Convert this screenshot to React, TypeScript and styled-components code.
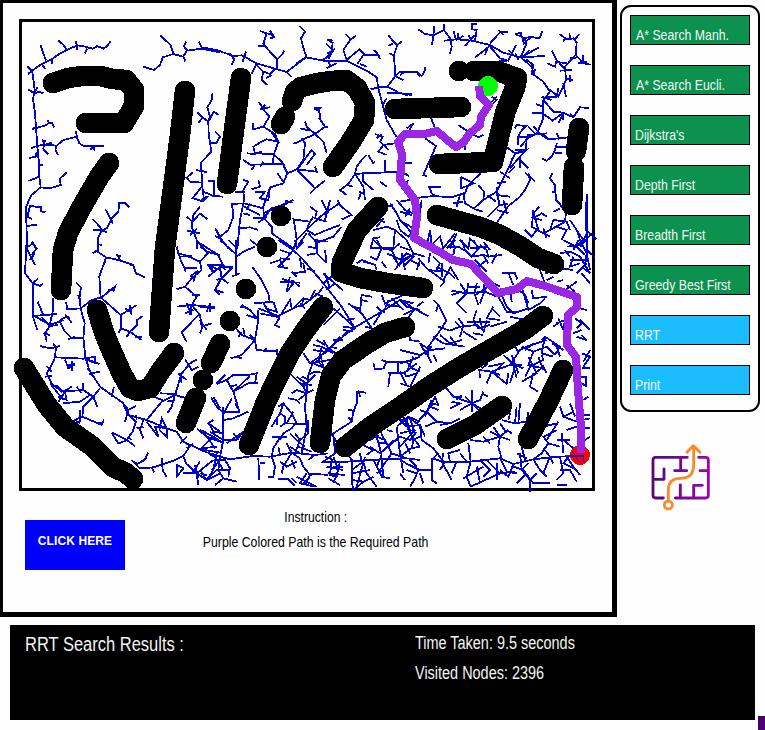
import React from "react";
import styled, { createGlobalStyle } from "styled-components";

const GlobalStyle = createGlobalStyle`
  * { box-sizing: border-box; }
  body { margin: 0; background: #fefefe; font-family: "Liberation Sans", Arial, sans-serif; overflow: hidden; }
`;

const Window = styled.div`
  width: 765px;
  height: 730px;
  display: grid;
  grid-template-rows: 617px 105px;
  row-gap: 8px;
  background: #fefefe;
`;

const Workspace = styled.div`
  display: grid;
  grid-template-columns: 617px 140px;
  column-gap: 3px;
`;

const Board = styled.main`
  border: 3px solid #000;
  border-right-width: 5px;
  border-bottom-width: 5px;
  padding: 16px 0 0 16px;
`;

const MapFrame = styled.div`
  width: 576px;
  height: 472px;
  border: 3px solid #000;
  svg { display: block; overflow: visible; }
`;

const BoardFooter = styled.div`
  display: grid;
  grid-template-columns: 100px 1fr;
  margin: 29px 0 0 6px;
`;

const ClickButton = styled.button`
  width: 100px;
  height: 50px;
  border: 0;
  padding: 0 0 9px;
  background: #0000ff;
  color: #fff;
  font: bold 12px "Liberation Sans", Arial, sans-serif;
  letter-spacing: 0.1px;
`;

const Instructions = styled.div`
  width: 382px;
  display: flex;
  flex-direction: column;
  align-items: center;
  margin-top: -16px;
`;

const NarrowText = styled.span<{ $size: number; $center?: boolean; $stretch?: number }>`
  display: block;
  font-size: ${(p) => p.$size}px;
  line-height: 25px;
  white-space: nowrap;
  transform: scaleX(${(p) => p.$stretch ?? 0.82});
  transform-origin: ${(p) => (p.$center ? "center" : "left")};
`;

const SideColumn = styled.aside`
  display: flex;
  flex-direction: column;
  padding-top: 5px;
`;

const Menu = styled.nav`
  width: 140px;
  height: 407px;
  border: 2px solid #000;
  border-radius: 11px;
  padding: 8px;
  display: flex;
  flex-direction: column;
  gap: 20px;
`;

const MenuButton = styled.button<{ $tone: "green" | "sky"; $indent?: number }>`
  width: 120px;
  height: 30px;
  flex: none;
  border: 1px solid #000;
  padding: 6px 0 0 ${(p) => p.$indent ?? 4}px;
  background: ${(p) => (p.$tone === "green" ? "#0c914f" : "#1bbdff")};
  color: #eefaf4;
  text-align: left;
  font-family: "Liberation Sans", Arial, sans-serif;
`;

const Logo = styled.svg`
  width: 100px;
  height: 100px;
  margin: 13px 0 0 10px;
  fill: none;
  stroke-width: 8.5;
  stroke-linecap: round;
  stroke-linejoin: round;
`;

const Footer = styled.footer`
  display: flex;
  gap: 3px;
  padding-left: 10px;
`;

const Results = styled.section`
  width: 745px;
  height: 95px;
  background: #000;
  color: #f4f4f4;
  display: grid;
  grid-template-columns: 390px 1fr;
  padding: 6px 0 0 15px;
`;

const ResultsHeading = styled.div`
  padding-top: 1px;
`;

const Stats = styled.div`
  display: grid;
  grid-auto-rows: 30px;
  align-content: start;
`;

const Corner = styled.div`
  width: 7px;
  height: 14px;
  align-self: flex-end;
  background: #4b0072;
`;

// Search tree branches, stored per sector at three units per pixel.
const sectors: { x: number; y: number; branches: string[] }[] = [
  {
    x: 0,
    y: 0,
    branches: [
      "M332 124L322 138L310 146L292 138L278 146L255 140L232 136L205 148L180 160L155 178L125 192L96 212L102 250L104 270L99 298L104 330L108 380L112 440L117 490L118 530L122 562L95 585L78 620L80 700L82 748",
      "M122 136L130 160L138 182M175 122L190 134L200 150M228 122L232 150M255 160L262 146M82 200L96 212L84 222M155 178L157 192M125 192L136 207M85 268L103 280L118 275L130 280M103 280L112 262",
      "M108 384L135 377L148 368L157 370L162 382M142 360L148 370M97 388L108 380M92 446L110 438L135 434L170 437L190 420L230 410L238 430L252 438L312 438M228 394L231 412M270 450L280 440L284 452",
      "M126 418L135 434L155 428M128 445L145 463M135 420L130 445M170 437L166 450L175 465M88 474L108 470L110 455M117 494L130 495M85 543L118 530M122 562L150 565L182 555L180 535L200 518",
      "M136 637L122 634L124 622L90 618L82 650L96 657M82 678L110 674M388 622L375 608L358 608L355 635L335 655L320 685L307 690L293 715L293 748M316 628L335 662L338 672M278 658L292 672L307 690L278 690M307 690L322 698M297 733L307 735",
      "M430 200L462 210L480 195L488 172L520 162L550 170L560 152L605 146L660 157M480 106L512 135L520 162M558 124L552 140L562 152M550 168L556 184M597 124L606 146",
      "M560 650L578 665L600 640L622 658M600 620L580 645L575 680L592 725L590 748M562 692L600 700M570 705L592 685M600 740L618 750M530 740V750M645 685L660 715M97 725L108 748",
      "M592 338L608 352L596 368M608 352L625 365M588 510L620 516M578 518L560 533L570 545L605 548M605 560L578 595L610 604L625 588",
    ],
  },
  {
    x: 200,
    y: 0,
    branches: [
      "M0 132L5 142L50 150L100 168L125 166L170 190L232 208L260 216L318 172L370 182L440 182L500 212L530 232L535 265L548 315L560 360L590 412",
      "M88 160L103 178L95 195M138 155L128 185M170 190L155 222M180 93L200 100L222 106M200 100L190 130L205 150L232 178V208M175 138H195M210 92L222 112L210 115M232 178L245 165L253 152",
      "M170 195L190 215L185 240L202 255M190 215L210 222L225 208M198 235L215 225M298 78L315 95L303 115L312 150L320 172M260 216L275 232M318 172L290 190",
      "M380 118L398 128L395 155L380 172L365 182M380 118L400 122M378 130L398 150M382 160L400 150L385 178M380 205L410 190M385 185L392 200",
      "M436 102L452 118L468 108M452 118L430 150L440 180M440 180L478 148L492 162L472 192M492 164H535L522 150M535 164L540 178M480 192L500 200",
      "M566 106L580 125L592 135L605 125M592 135L582 165L586 230M565 138L580 130M568 160L582 167M586 228L600 215L650 215L660 230M586 228L562 260L535 262M586 228L610 240M562 260L600 280L635 285M560 278H605M512 268L535 262M548 315L560 295",
      "M25 365L42 335L55 345M38 278L35 300L22 322L30 350L25 365L26 400L34 455L3 488L7 560L12 600M45 395L60 410L50 428L28 430M25 542H43V588L70 590M10 575L40 588M0 605L20 588",
      "M175 305L190 325L210 322M180 330L195 315M185 322L208 350L190 380L160 388L158 370M190 380L225 402L235 425L222 462L218 490M235 425L200 418L185 425L160 440L165 460L220 462M142 460L165 462L185 455",
      "M128 478L150 494L250 492L262 520L250 550L210 562M155 510L165 492M180 500L190 485M220 462L245 485L262 520L290 508L310 480L315 430L305 415M215 398L238 430",
      "M280 432L345 402L375 380M345 402L320 380L315 365M300 385L330 392M345 402L370 425L380 458M350 325L362 345L358 355L375 380L385 382M342 325H360L355 332Z",
      "M290 508L350 515L345 500M290 508L345 565L375 542M345 565L330 580M292 508L335 450L345 462L320 495M310 480L325 465M155 568L180 560L175 540M165 575H195L180 595L205 600L210 562",
      "M130 540L145 545L130 570L132 600L120 660L112 748M105 575H135M232 520L250 545M92 612L132 610L190 625M96 610L100 650L85 690L58 712M50 690L62 715L85 745M45 708L60 715M120 685L150 682L175 690M130 640L150 645M150 610L140 630M132 620L180 645",
      "M210 562L190 620L192 655L215 680V700L280 745M190 640L280 600M190 655L215 625L260 612M255 602L280 608M158 655H192M175 668L200 650",
      "M500 465L485 480L470 500L465 522L490 520L590 516M505 465L520 490L525 485M555 480V515M465 522L490 560L495 600M465 522L445 552L420 570L440 585M440 555L460 560M478 575L495 582M490 520V545L520 570M540 545L560 560M475 600L482 580",
      "M525 402L548 410L540 425L550 435L585 430M530 415L545 402M550 435L535 455L560 465M550 432L565 450M610 490H630M605 520L625 525M640 370L625 395",
      "M280 655L285 680L290 720L280 748M280 658L330 665L340 650M290 720L330 680L360 650L415 612M330 620L350 635L345 655L380 665M365 600L385 640M390 600L375 660M415 612L455 645L425 658M412 600L420 615",
      "M320 690L345 705L380 690L420 675M325 700L350 728L400 710L425 680M295 735L320 700M345 665L385 630M330 665L320 690M348 725V748",
      "M520 690L560 680L585 690L620 720M550 655L530 680M540 660L555 668M520 715L512 745H580L585 690M520 715L540 712M570 610L590 640L600 660L620 680L635 700M590 600L615 630L640 640M600 690L590 660M560 620L580 615",
    ],
  },
  {
    x: 400,
    y: 0,
    branches: [
      "M55 88L75 102L100 106L132 90L150 115L155 140L150 162M103 78L100 106L96 136M132 72V92M133 122L170 118L215 122L270 135L310 158L362 172L395 200L402 225L430 245L450 275L430 300L428 360L410 402L380 415L378 450L345 462L318 520L290 575L298 615L262 652",
      "M160 92L168 118M175 98L172 118L190 108M213 72H230M215 72L217 88L230 90L225 122M195 138L225 105M215 122L205 105M325 95L300 97L270 130M310 105L295 90M225 172L270 138L285 155M255 165L262 145M270 140L300 175L325 182L348 135M325 150L335 160M298 182H320",
      "M345 102L375 115L390 110L418 115L428 92M375 115L378 135L362 172M362 98L372 130L392 112M348 102L362 98M362 172L418 142M362 172L434 168M345 160L355 180M375 165L388 150",
      "M478 102L500 118L520 115L530 128L527 165L495 200L498 240L475 290L450 270M508 98L510 115M538 102L525 118M495 115L490 125M527 165L550 190L572 194M510 175L535 172M550 165V185M535 190L560 185",
      "M455 152L470 180L495 208M442 190L465 200L470 180M465 185L500 190M480 212L515 210M510 225V245M495 235L520 240M490 250L498 290M475 265L470 290L435 290M378 178L400 195L395 225M405 208L400 225",
      "M430 300L460 335L490 338L520 352L540 322L566 324M430 320L408 312M395 338L428 340L458 362L490 338L475 370M520 352L510 340M425 290L455 300M490 338V360",
      "M345 385L350 375L378 378L362 395L355 410V435M400 378L420 402L445 418L508 412M380 405L440 400M355 412H385L362 440M385 380L405 400M445 418L430 400M470 400L478 418M470 430L468 442L498 440M468 442L455 470L440 482L425 475M465 460L485 458",
      "M315 438L345 460L378 450L355 475L330 505M345 462L335 480M378 450L345 450M355 475L385 505M360 470V505M385 520L390 540L375 570L360 590L325 618L288 672M375 518L392 532L406 545M300 515L330 535M345 500L325 520M318 545L290 550M290 575L250 600M290 560L298 615L325 612M288 585L330 590M262 585L288 605M310 600L320 640M290 630L325 640",
      "M75 415L108 438L70 525L82 530M92 350L105 385M175 375L205 395L235 412L250 405M195 425V450M275 290L290 300L270 318M290 290L270 310",
      "M40 595L100 588L155 592L190 580L195 610L225 628L250 635M85 560H122M88 560L95 580L105 588M182 530V565L222 550L182 530M242 520L205 555L190 590M180 585L170 620M235 555L252 575L250 600L222 625M160 610L190 605",
      "M0 225L15 215H50L65 228L76 210L75 200M0 278L20 285L35 280M20 385L40 370M15 490H35M15 520L28 530M15 555L25 540M0 605L30 600M0 635L35 645M5 665L50 690M15 650L30 625M0 690L25 710L40 690M60 640L65 600",
      "M80 740L90 690L95 735L120 710L130 745L165 700M140 745L165 720M170 700L150 745M180 720L205 745L210 715L240 745",
      "M458 518L450 535L465 555L468 600L478 610L498 640L495 665L450 690L430 700L395 680L400 640L418 620M392 652L425 660M398 630L415 690M440 650L425 640L400 655M375 690L395 710L410 690L450 710M430 685L440 715M450 690L460 660L500 665L510 690M455 575H467M460 635L480 625",
      "M562 583V745M558 605V690L590 718M510 660L550 720L520 745M470 680L500 690L485 720M530 690L545 735L575 700M540 740L560 700",
    ],
  },
  {
    x: 0,
    y: 240,
    branches: [
      "M80 0L75 100L98 130V225L150 255L190 240M75 25L100 10M80 25L105 75M95 5L110 25L95 45M90 60L105 40M98 130L120 138L130 130M98 130L115 115M113 185L130 225M98 228L172 222M158 175V215L148 260L135 280L140 305M98 228L112 270M125 232L150 258M130 280L150 285",
      "M175 255L150 258M180 240L200 230L215 248M195 225L210 235M180 245L195 275L215 295L250 293M205 298L225 290M227 127L243 142L238 175L242 205L254 250L250 293L256 352L268 390L300 440L335 465L368 488L385 525L440 540L500 565L530 575L550 605L600 628L660 638",
      "M198 185L202 208L242 205L275 180L305 172M233 165L242 180M293 0V35L318 52L298 110L302 172L362 225V265L390 275L410 290L425 300M278 40L293 30M318 52L355 60L400 75L408 100L435 112M318 52L312 75M350 42L360 60M355 60L362 45M385 68L395 78M305 172L345 140L340 155M325 150H345",
      "M362 225L410 195M375 205L395 218M390 195L395 225M362 265L355 280M390 275L412 255V240L427 228M390 275L380 290M405 290H425",
      "M120 318L150 325L180 318M150 325L168 322L165 352L250 356L285 350L286 370L256 356M160 310L168 325M165 352L155 375L140 400L155 430L185 455L250 450L280 470L300 445M195 358L205 385L225 370M215 362V392M200 375H225M140 378L155 395M135 410L155 408M256 356L298 372M262 385L275 400L300 395M268 400L282 410",
      "M150 430L190 480M175 485L195 455L200 480L175 470M170 435L190 455L215 440M250 430V450M230 440L245 460M188 490L240 485L270 465M280 470L292 500M280 470L250 500L247 530L305 555L312 538M247 530L225 540L240 550M240 510V545M290 550L310 548",
      "M335 470L342 440M368 488L385 510L375 545M385 510L408 498M385 525L408 545L398 575L380 600L338 578M380 600L355 612M380 600L405 618M335 578L355 610M385 590L395 600M408 525L410 540",
      "M440 540L485 485L525 465L560 475M462 470L490 482M525 465L515 500L502 520M480 460L530 462M500 485L525 480M525 465L545 400L570 370L592 358M555 358L575 390L595 380M535 400L560 420M540 400L545 430M430 540L420 570L430 595M440 545L475 590L465 560L500 565L485 535L478 570L500 590V565M410 565L430 560",
      "M395 660L420 685L460 682L520 662L550 648M408 675L440 655M445 638L430 665M400 665L415 672M455 680L462 697M485 655L488 690L500 712M545 600L570 618L550 648L558 670L590 700L620 720L660 700M530 675V710L550 685ZM540 610L560 590M590 565L620 590L660 605M600 628L640 590M600 570L620 578M560 625L580 610",
      "M575 700L600 665M590 700L595 735M590 700L640 660M550 700L590 700M585 675L595 715M620 720L640 690L650 640M605 625L650 620M640 540L625 550L660 575M640 470L660 505",
      "M530 20L540 55L558 95M530 40L555 45L600 65L605 90L575 115L555 140L530 148M590 0L620 35L660 45M600 65L625 38M540 50L575 48M555 85H590M570 110L590 95L580 125M555 140L590 170L575 195L530 200M575 165L600 165M575 195L570 225M575 195L645 202M630 190V215M575 195L600 225L605 260M595 225L545 278L560 305M605 260L635 250M600 280L610 255M560 190L575 225M622 75L660 90M625 75L640 100M645 150L660 120M555 220L580 210",
    ],
  },
  {
    x: 200,
    y: 240,
    branches: [
      "M0 10L55 45L75 90M108 0V105M110 50L130 35L165 20M60 0L110 45M85 0L105 20M22 75H60L95 85L65 115L45 150L60 165M25 110L60 80L100 80M40 95L30 75M65 115L85 130M45 150L72 158M95 110L120 100M60 80L65 115L50 120M150 0L185 25M20 270L0 240",
      "M158 82L185 120L205 160L210 190M125 195L150 210L175 240L165 300L170 330L230 335M120 200L145 205M140 225L170 235M162 190L220 185M175 205L235 228L290 200L310 195L355 160L370 140M180 220L240 232M190 190L215 225M195 205L230 215L220 185M175 210V240M245 220L270 180L275 205M240 232L225 255L240 262M280 205L310 175L330 180L345 150M300 190L315 205M310 175L305 200M345 160L370 170",
      "M105 262L125 285L165 300L125 345L92 355M125 275L115 290M130 265L135 290M165 300L150 285M105 350L125 355M190 335L200 325M215 335L232 330V345",
      "M235 0L280 30L310 60L370 130L425 200L465 265L430 260M280 30L255 60L235 80L265 85M240 55L270 58M210 70L240 60L250 80M240 30L270 40M260 15L290 40M310 70L315 95L275 100M320 85L345 95M260 155L280 130L245 115M240 125L300 128M270 110L260 155M275 120L300 140M275 95L290 110M300 55L305 85",
      "M285 0L290 25L310 5M350 0V40L320 45M350 40L380 70M345 0L385 5M375 30L380 70M325 20L350 25M370 100L430 152M375 100L390 145M370 130L395 110M380 150L405 130",
      "M370 255L395 230L420 205M445 190L485 220L515 265M480 215L485 165L515 170M460 200L480 205M485 180L505 185M440 240L465 265L440 280L365 345M400 205L440 240L465 235M430 270L460 275M425 290L445 270M465 262L545 215L600 180L640 190M515 265L495 260M520 255L545 215L530 200M545 165L555 190L620 160M565 180L550 220M600 180L620 200L660 210M575 175L610 210M620 160L640 170M560 195L600 200M610 225L640 210",
      "M340 315L365 320L400 340M370 300L385 325L415 345M350 300L375 315M375 340L420 290M365 320L355 370M330 370L365 345M310 340L330 370L390 360M340 330L375 335M345 355L375 385L340 370M360 340L370 380M390 320L410 325M400 300H430",
      "M340 365L325 405L320 460L315 500L320 560L305 640M325 405L345 395L380 400M270 400L310 440L320 460M290 410L325 435M320 460L290 450L275 460M300 430L335 435M295 480L320 460L340 450M310 440L345 405M305 410L330 420M265 475L290 480L300 490",
      "M235 500L250 490L275 520L290 550M250 490L240 520L215 560M240 520L255 530V550L325 552M255 550L240 560M290 545L275 565L250 580L240 600M230 530V555M260 550L280 515M215 592H262M240 592L220 625L215 650M325 540V580L300 600L285 580M270 580L290 600L315 620M295 620L335 635",
      "M50 432L80 420L100 405H145L170 400L165 430M50 430L75 405M80 420L100 455L145 430M100 455L150 408M100 455L118 515H70M145 430H175M90 440L110 435M70 500V600L60 650M33 472L50 500L72 520L95 475M72 540L100 535L145 515M25 545L40 575L72 580M30 575L70 600M105 490L120 515M80 610L130 575M70 600L110 600L130 575M0 570L40 590L70 610M10 575L45 625M100 580L115 600",
      "M0 630L60 650L90 658L160 648L210 650L275 638L345 645M60 650L55 690L70 715L110 725M45 660H75L90 685L85 710M35 690L60 660M40 640L70 690M0 690L20 720L50 690H90M70 715L45 735M0 700L20 705M25 640L50 655M175 655L178 720M180 670H195M215 650L225 680L220 710L205 712",
      "M235 620L240 645M260 610L275 638L250 680L245 700M240 665L260 680L290 665M275 638L300 655L310 680L330 705L315 735M270 620L300 640M285 640L300 600M275 660L285 685M235 718H265L285 738M290 710L320 725L350 740M330 705L355 700M325 660L345 645L385 640M320 700L300 730L345 740M275 715L290 730M310 730L330 712M325 700L385 705",
      "M498 458L470 455V490L460 515L455 545L400 580L405 640L370 665H440L510 660L620 655L660 660M475 450L480 470M445 510L465 512M455 545L445 530M390 575L410 605M395 660L390 705L410 710L420 665M400 650L415 690L400 730M380 680L430 690M385 700L435 705M385 715L420 735M400 680H430M455 665V720L460 750L490 725L455 720M455 690L490 665L500 700L530 740M440 640L460 665M480 640L485 665M495 650L470 740M455 700L510 690M490 725L520 710M375 650L400 660",
      "M520 370L525 388L555 385M545 360L560 365H620L660 350M560 365L550 385M595 365V400M565 400H610L650 370M570 400L565 440M610 395L620 410M620 365L640 390",
      "M530 590L555 600L575 640L620 655M530 590L545 645L530 680M510 620L540 640M590 560L600 640L610 700M590 560L625 530L660 545M540 570L555 605M510 600L535 585M490 615L520 630L500 645M540 640L600 590M545 655L550 710M575 640L540 690M620 540L640 600L660 590M600 540L620 560M555 625L580 600M600 580L640 570M600 650L640 620M535 610H560M615 610L630 640M560 570L580 575M520 660L545 710L570 715M620 690L650 700M630 580L660 620M630 660L650 680M530 700L550 690",
      "M520 0L545 25L530 60L510 50M530 0L545 25L575 30L600 10M470 70L485 60L525 75L530 90M490 65L510 70M560 40L605 60L650 40M575 30L590 60M605 60L585 90M605 40L615 90M590 80L630 50M545 65L560 85M630 60L660 75M580 50L600 80M0 200L45 205M30 190L20 215",
    ],
  },
  {
    x: 400,
    y: 240,
    branches: [
      "M0 60L20 40L40 50L10 80M0 20L30 30M20 0L40 40L75 50M55 55L80 85L135 125M100 50L120 70L110 90M110 80L150 100L165 115M125 70V110M135 125L120 140M150 85L130 120M60 60L50 90M85 90L130 95M90 40L85 70M150 80L175 120",
      "M150 0L165 20L160 45M185 0L195 30L215 50L250 45L270 50M175 20L200 35M215 50L240 20M240 15L260 30L265 50L305 45M250 45L265 70M210 25L260 20M225 60L260 95M270 30L250 5M290 40L275 70M150 20H180M220 0L235 25M235 80L260 60",
      "M155 152L200 160L255 155L290 170M155 165L185 155M180 130L200 160L170 190L200 220M205 130L200 160M255 125L250 150L225 165L235 195M270 120L255 150L240 190M200 140H240M230 130L225 155M250 150L280 130L300 140M305 98L345 100L352 118M325 98L340 135M305 165L320 200L340 220L385 205M295 170L320 215H355M330 150L335 185M365 140L385 210L420 190L435 175M350 145L375 165L385 190M395 150L400 175L440 170M420 90L435 130M435 100L455 95M440 120L460 110M470 125L490 120",
      "M480 40L510 35L540 50L570 100L545 80M490 0L530 20L555 45M500 20L540 15M540 0L560 40L555 80M520 50L510 80L540 70M560 40L570 90M495 30L510 50M530 100L560 70M520 30L535 0M560 0V45M480 85L520 90M545 100L570 130M510 60H555M495 150L530 125M500 135L525 155M585 52L560 30",
      "M0 180L20 190L40 205L85 228M50 200L70 185M20 240L45 205M100 180L115 195L135 235L140 240L125 265L85 320V350L95 370M115 195L108 215M0 330L60 345L90 330L135 325M25 260L30 300L60 305M115 260L150 272L180 260L230 255L250 270M165 245L180 260M120 285L150 310L185 300M100 290L130 310L195 320M175 235L190 255L180 290M230 210L220 240L235 265L270 255M240 235L245 260M260 240L250 280M200 245H270M280 200L260 235L300 240M275 205L300 230",
      "M0 370L50 355L95 320M35 385L60 395M20 410L50 400M0 395L20 435M80 345L60 310L90 330M150 290L170 315M330 230L375 240M270 260L320 245M100 345L110 365M40 350L20 395M0 430L30 440L60 380M190 275L230 300M220 280L250 285",
      "M470 250L495 240L490 270L475 235M460 260L480 245M525 235L545 250L530 265M520 200L560 210M540 240L570 270M520 280L545 270M530 290L560 300L545 285M545 340L570 350L550 380M550 365L570 330M545 385H570M540 410H558V435M545 430L560 440M550 480L565 470M540 525H570M545 540L570 535M545 565H570M555 600L570 590M480 500L490 530L520 515M490 530L530 545M510 490L525 530M500 570L530 560",
      "M240 415L238 390L275 395L330 375L360 330L380 320L440 300M245 385L265 370M275 395L260 430M275 395L320 432L325 400M275 395L300 405M265 380L310 370L280 400M320 355L345 380L330 430M340 375L350 415M310 345L345 375L370 385M335 345L355 400M330 375H365M365 320L400 335L440 320L465 345M375 330L400 310M425 300L435 290L480 320L465 345M435 290L425 340L460 350M400 335L385 375L430 385M390 380L430 360L425 345M385 350L410 400L365 425M395 370L375 410M400 400L390 440L415 455M405 400L430 380L440 400M415 350L430 390M470 320L480 350M455 310L490 330M345 320L355 335",
      "M135 440L160 470L215 490L240 480L250 455M215 450V515M195 470L235 510M160 470H185M185 465L170 480M215 490L180 510M215 490L250 510M155 485L180 490L150 505M245 460L265 470",
      "M0 540L30 535L50 550L100 490M30 535L45 580M20 560L60 555L75 590M60 555L65 600L100 625L130 665M105 470L95 490L115 495ZM90 500L115 510M75 560L110 545L150 550L180 535M95 480L75 530M150 550L120 555M0 590L30 600L50 575M40 600L35 625L60 620M0 620L45 570M60 510L85 520L110 545M10 530L30 580",
      "M95 655L130 665H210L300 655L340 672L400 658L470 650L545 648M95 655V720L110 730M95 660L115 640M130 640L125 665L155 720M100 690H55L0 660M55 690L45 715L30 740M30 675L60 690M150 665L145 640L180 630M205 610L212 665L200 710L212 740M180 640L200 665M170 665L155 700M190 715L250 680M212 740L300 700L345 695M240 660L270 690L250 710M260 660L300 700M230 680L240 730M290 670V720M300 655L320 695L350 700M340 672L325 710L300 690M120 690L135 665",
      "M210 600L250 605L300 590L325 570M250 590L270 610M280 560L300 590L295 620L305 655M270 575L300 590L330 600M305 540L345 550L350 500M345 550L380 545L385 515M325 540L330 520M320 570L335 580M360 490L355 550M300 550L320 580",
      "M470 570L430 590L445 610L425 640L400 658M430 560L470 550M445 610L480 620M475 545L440 600M485 580L490 640M470 600H510M430 625L450 650L460 670M490 600L520 625M500 650L520 680L540 705M480 650L490 700L470 720M360 640L365 690L390 720V755M365 690L385 670M340 680L370 690L400 730H450M390 720L410 700M400 658L420 690L440 710M375 660L365 620M450 650L430 700M480 690H510L530 725M470 735H500M505 650L490 670L530 690M380 700L350 730M0 700L15 720M70 730L60 700M350 640L380 655",
    ],
  },
];

// Obstacles painted with a round brush.
const obstacles = [
  "53,83 68,78 82,76 100,76 113,79 126,80 134,90 134,106 124,123 86,123",
  "109,163 99,177 80,210 68,233 63,250 61,290",
  "185,91 180,135 175,173 165,248 159,332",
  "241,78 234,130 227,184",
  "292,101 295,92 301,87 318,83 331,81 346,80 357,88 365,103 364,120 350,143 333,167",
  "281,124 285,117",
  "281,216 281,216",
  "267,247 267,247",
  "246,289 246,289",
  "230,321 230,321",
  "220,344 211,363",
  "203,380 203,380",
  "196,398 186,423",
  "395,109 461,107",
  "459,71 459,71",
  "474,71 497,71 517,78 515,88 506,110 500,133 493,162 439,164",
  "579,128 576,151",
  "574,167 572,205",
  "437,215 480,227 500,235 520,246 538,258 554,264",
  "378,207 357,230 342,262 341,272 360,278 387,283 423,288",
  "97,310 105,335 113,354 122,374 130,388 138,391 150,388 160,372 174,353",
  "24,368 47,405 65,427 92,446 113,467 126,473 133,479",
  "323,307 306,329 290,353 275,383 266,402 249,445",
  "405,327 385,333 368,343 343,360 331,376 325,400 320,443",
  "345,447 370,427 400,407 430,386 460,367 500,344 524,330 543,316",
  "447,439 475,425 502,406",
  "563,370 548,402 528,439",
];

const requiredPath =
  "479,86 480,96 489,105 481,117 480,125 469,134 464,142 456,147 446,139 437,131 425,134 405,134 398,142 402,154 400,180 415,200 417,217 414,238 440,252 453,260 471,264 482,276 498,293 517,289 527,281 545,286 577,297 577,307 568,315 567,345 576,357 578,390 581,427 581,453";

function SearchMap() {
  return (
    <svg width="570" height="466" viewBox="22 22 570 466" fill="none" shapeRendering="crispEdges">
      <g stroke="#0000cd" strokeWidth="5.4">
        {sectors.map((s) => (
          <g key={`${s.x}-${s.y}`} transform={`translate(${s.x} ${s.y}) scale(${1 / 3})`}>
            {s.branches.map((d) => (
              <path key={d} d={d} />
            ))}
          </g>
        ))}
      </g>
      <g stroke="#000" strokeWidth="20.6" strokeLinecap="round" strokeLinejoin="round">
        {obstacles.map((points) => (
          <polyline key={points} points={points} />
        ))}
      </g>
      <circle cx="488" cy="86" r="10" fill="#00ff00" />
      <circle cx="580" cy="455" r="10" fill="#ff0000" />
      <polyline points={requiredPath} stroke="#9a27e6" strokeWidth="8" strokeLinejoin="round" />
      <path d="M565 456H583L584 462M576 458L581 463M573 452L577 458" stroke="#2a16c0" strokeWidth="1.4" />
    </svg>
  );
}

function MazeLogo() {
  return (
    <Logo viewBox="0 0 300 300">
      <defs>
        <linearGradient id="maze" gradientUnits="userSpaceOnUse" x1="65" y1="0" x2="238" y2="0">
          <stop offset="0" stopColor="#560878" />
          <stop offset="1" stopColor="#9607ae" />
        </linearGradient>
      </defs>
      <path
        stroke="url(#maze)"
        d="M172 97H77Q69 97 69 105V211Q69 219 77 219H100M206 97H227Q235 97 235 105V211Q235 219 227 219H136M71 163H102V132M152 99V137M134 137H170M210 137H233M151 180V217M191 217V181H217"
      />
      <path stroke="#f98a2b" d="M115 222V196Q115 160 151 160Q191 160 191 120V64M171 82L190 62L210 82" />
      <circle cx="115" cy="240" r="12" stroke="#f98a2b" />
    </Logo>
  );
}

const searchItems: { label: string; tone: "green" | "sky"; indent?: number }[] = [
  { label: "A* Search Manh.", tone: "green", indent: 5 },
  { label: "A* Search Eucli.", tone: "green", indent: 5 },
  { label: "Dijkstra's", tone: "green" },
  { label: "Depth First", tone: "green" },
  { label: "Breadth First", tone: "green" },
  { label: "Greedy Best First", tone: "green" },
  { label: "RRT", tone: "sky" },
  { label: "Print", tone: "sky" },
];

export default function App() {
  return (
    <>
      <GlobalStyle />
      <Window>
        <Workspace>
          <Board>
            <MapFrame>
              <SearchMap />
            </MapFrame>
            <BoardFooter>
              <ClickButton>CLICK HERE</ClickButton>
              <Instructions>
                <NarrowText $size={15} $center $stretch={0.81}>Instruction :</NarrowText>
                <NarrowText $size={15} $center>Purple Colored Path is the Required Path</NarrowText>
              </Instructions>
            </BoardFooter>
          </Board>
          <SideColumn>
            <Menu>
              {searchItems.map((item) => (
                <MenuButton key={item.label} $tone={item.tone} $indent={item.indent}>
                  <NarrowText $size={15}>{item.label}</NarrowText>
                </MenuButton>
              ))}
            </Menu>
            <MazeLogo />
          </SideColumn>
        </Workspace>
        <Footer>
          <Results>
            <ResultsHeading>
              <NarrowText $size={20} $stretch={0.825}>RRT Search Results :</NarrowText>
            </ResultsHeading>
            <Stats>
              <NarrowText $size={18} $stretch={0.803}>Time Taken: 9.5 seconds</NarrowText>
              <NarrowText $size={18} $stretch={0.803}>Visited Nodes: 2396</NarrowText>
            </Stats>
          </Results>
          <Corner />
        </Footer>
      </Window>
    </>
  );
}
